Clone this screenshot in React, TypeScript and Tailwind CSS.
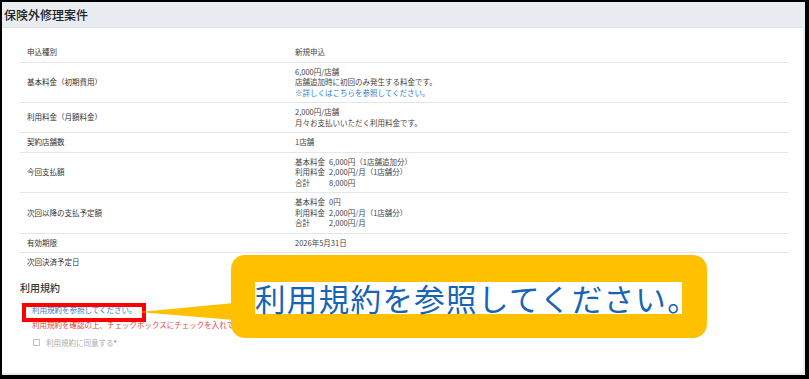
const rows: { label: string; lines: React.ReactNode[] }[] = [
  { label: "申込種別", lines: ["新規申込"] },
  {
    label: "基本料金（初期費用）",
    lines: [
      "6,000円/店舗",
      "店舗追加時に初回のみ発生する料金です。",
      <span className="text-[#2f7fcf]">※詳しくはこちらを参照してください。</span>,
    ],
  },
  {
    label: "利用料金（月額料金）",
    lines: ["2,000円/店舗", "月々お支払いいただく利用料金です。"],
  },
  { label: "契約店舗数", lines: ["1店舗"] },
];

const Breakdown = ({ items }: { items: [string, string][] }) => (
  <div className="grid grid-cols-[34px_1fr]">
    {items.map(([k, v], i) => (
      <div key={i} className="contents">
        <span>{k}</span>
        <span>{v}</span>
      </div>
    ))}
  </div>
);

const Row = ({
  label,
  children,
  last,
}: {
  label: string;
  children: React.ReactNode;
  last?: boolean;
}) => (
  <div
    className={`flex py-[4px] leading-[10.5px] ${last ? "" : "border-b border-[#e6e6e6]"}`}
  >
    <div className="w-[275px] shrink-0 pl-[7px] self-center text-[#333]">{label}</div>
    <div className="flex-1 text-[#444]">{children}</div>
  </div>
);

export default function App() {
  return (
    <div className="relative w-[809px] h-[379px] overflow-hidden border-black border-l-2 border-t-2 border-r-4 border-b-4 bg-[#e9ecf1] font-['Noto_Sans_CJK_JP',sans-serif]">
      <div className="h-[25px] flex items-center pl-[2px] text-[12px] font-medium text-[#222]">
        保険外修理案件
      </div>

      <div className="h-[346px] mr-[2px] bg-white border-t border-[#dfe2e8] pt-[15px] pl-[18px] pr-[15px] text-[7.5px]">
        <div>
          {rows.map((r, i) => (
            <Row key={i} label={r.label}>
              {r.lines.map((l, j) => (
                <div key={j}>{l}</div>
              ))}
            </Row>
          ))}
          <Row label="今回支払額">
            <Breakdown
              items={[
                ["基本料金", "6,000円（1店舗追加分）"],
                ["利用料金", "2,000円/月（1店舗分）"],
                ["合計", "8,000円"],
              ]}
            />
          </Row>
          <Row label="次回以降の支払予定額">
            <Breakdown
              items={[
                ["基本料金", "0円"],
                ["利用料金", "2,000円/月（1店舗分）"],
                ["合計", "2,000円/月"],
              ]}
            />
          </Row>
          <Row label="有効期限">2026年5月31日</Row>
          <Row label="次回決済予定日" last>
            {""}
          </Row>
        </div>

        <div className="mt-[9px] text-[10px] leading-[14px] font-medium text-[#333]">利用規約</div>
        <div className="ml-[12px] mt-[9.5px] leading-[11px] text-[#2f7bc8]">
          利用規約を参照してください。
        </div>
        <div className="ml-[12px] mt-[4px] leading-[11px] text-[#e2453c] whitespace-nowrap">
          利用規約を確認の上、チェックボックスにチェックを入れてください。
        </div>
        <div className="ml-[13px] mt-[7px] flex items-center gap-[6px] leading-[11px] text-[#aaa]">
          <span className="w-[7px] h-[7px] border border-[#c4c4c4] bg-white"></span>
          <span>
            利用規約に同意する<span className="text-[#e2453c]">*</span>
          </span>
        </div>
      </div>

      {/* annotation overlay */}
      <div className="absolute left-[20px] top-[301px] w-[124px] h-[19px] border-4 border-[#ff0000]"></div>
      <svg
        className="absolute left-[135px] top-[299px]"
        width="100"
        height="22"
        viewBox="0 0 100 22"
      >
        <polygon points="2,11 97,2 97,19" fill="#ffc000" />
      </svg>
      <div className="absolute left-[229px] top-[253px] w-[476px] h-[83px] rounded-[14px] bg-[#ffc000] flex items-center pl-[24px]">
        <span className="inline-block h-[32px] leading-[32px] mt-[3px] bg-white text-[30.5px] tracking-[1.35px] text-[#1763b5] whitespace-nowrap">
          利用規約を参照してください<span className="mr-[-17px]">。</span>
        </span>
      </div>
    </div>
  );
}
